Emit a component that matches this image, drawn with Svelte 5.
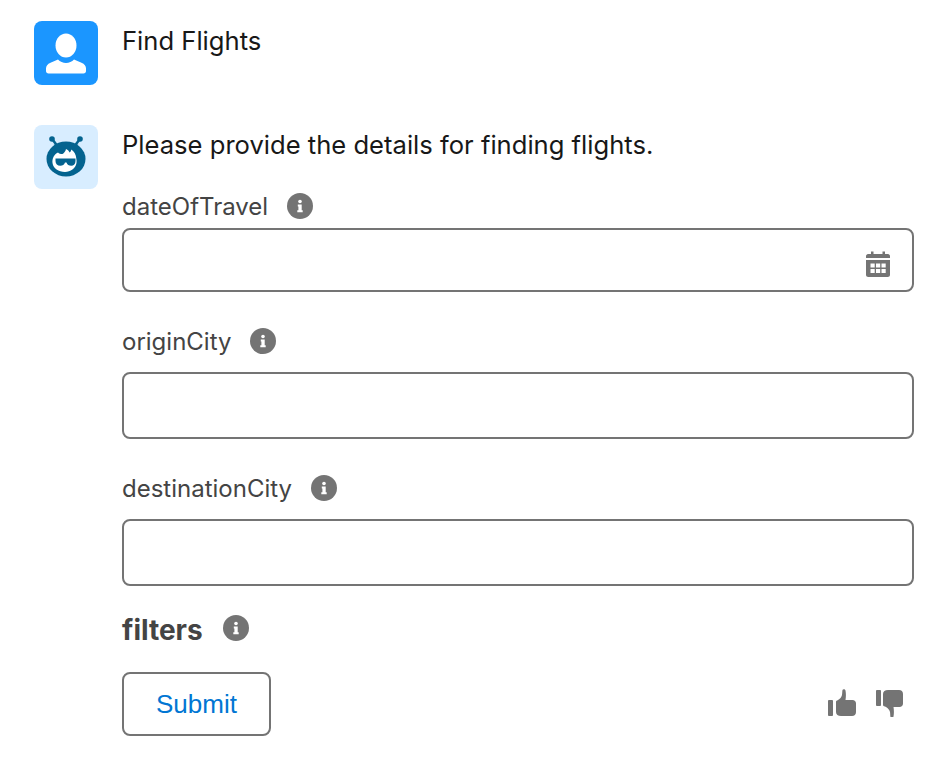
<script>
  const fields = [
    { name: "dateOfTravel", date: true },
    { name: "originCity" },
    { name: "destinationCity" }
  ];
</script>

{#snippet info()}
  <svg class="info" viewBox="0 0 26 26" width="26" height="26">
    <circle cx="13" cy="13" r="13" fill="#747474" />
    <circle cx="13" cy="8.500" r="1.800" fill="#fff" />
    <path d="M10.800 11.500h3.900v5.800h1v2h-5.400v-2h1.100v-3.800h-.6z" fill="#fff" />
  </svg>
{/snippet}

<main class="chat">
  <div class="message user">
    <div class="avatar blue">
      <svg viewBox="0 0 64 64" width="64" height="64">
        <ellipse cx="32" cy="24.500" rx="10.500" ry="12" fill="#fff" />
        <path d="M12 50v-2.500c0-2.500 1.500-4.500 4.500-5.800l7.500-3.200c2 2.300 5 3.500 8 3.500s6-1.200 8-3.500l7.500 3.200c3 1.300 4.500 3.300 4.500 5.800V50c0 1.500-1 2.500-2.500 2.500h-35C13 52.500 12 51.500 12 50z" fill="#fff" />
      </svg>
    </div>
    <p class="text">Find Flights</p>
  </div>

  <div class="message bot">
    <div class="avatar pale">
      <svg viewBox="0 0 64 64" width="64" height="64">
        <g fill="#04638f">
          <path d="M19 13l5.500 7.500-2 1.500-5.500-7.500z" />
          <path d="M45 13l-5.500 7.500 2 1.500 5.500-7.500z" />
          <circle cx="18" cy="14" r="2.800" />
          <circle cx="46" cy="14" r="2.800" />
          <ellipse cx="32" cy="34" rx="19.500" ry="17.500" />
        </g>
        <path d="M18.500 38c-.5-4.500 1.500-8.500 5.500-10.500 1 1 2.500 1.500 4.500 1.500 1.500-1 3-2.500 3.500-5 2 1 3 2 3.500 3.500 1-.5 1.500-1.500 1.800-3 3 2 4.700 5 5 9 .4 1.500.4 3 .2 4.500-1 5.500-6 9-11.500 9-6.500 0-11.700-3.500-12.500-9z" fill="#fff" />
        <path d="M21.500 33.500h20v2.500c0 3-1.700 4.800-4.300 4.800-2.300 0-4-1.200-4.700-3.300h-1.500c-.8 2.100-2.400 3.300-4.700 3.300-2.800 0-4.800-1.800-4.800-4.800z" fill="#04638f" />
      </svg>
    </div>
    <div class="body">
      <p class="text">Please provide the details for finding flights.</p>
      <form class="form" on:submit|preventDefault>
        {#each fields as field}
          <div class="field" class:dated={field.date}>
            <div class="label">
              <label for={field.name}>{field.name}</label>
              {@render info()}
            </div>
            <div class="control">
              <input id={field.name} type="text" />
              {#if field.date}
                <svg class="calendar" viewBox="0 0 24 26" width="24" height="26">
                  <path d="M5 .5h2.500v2.500h9V.5H19V3h3c1 0 2 1 2 2v2H0V5c0-1 1-2 2-2h3z" fill="#747474" />
                  <path fill-rule="evenodd" d="M0 9h24v14.700c0 1.300-1 2.300-2.300 2.300H2.300C1 26 0 25 0 23.700zM4.500 12.500v4h4.200v-4zM10 12.500v4h4.200v-4zM15.500 12.500v4h4.200v-4zM4.500 18v4h4.200v-4zM10 18v4h4.200v-4zM15.500 18v4h4.200v-4z" fill="#747474" />
                </svg>
              {/if}
            </div>
          </div>
        {/each}

        <div class="filters">
          <h3>filters</h3>
          {@render info()}
        </div>

        <div class="actions">
          <button type="submit">Submit</button>
          <div class="votes">
            <svg viewBox="0 0 28 27" width="28" height="27">
              <path d="M0 12c0-.5.500-1 1-1h3c.5 0 1 .5 1 1v14c0 .5-.5 1-1 1H1c-.5 0-1-.5-1-1z" fill="#747474" />
              <path d="M8 13c0-1 .7-1.500 2-2 2-1 3.500-3 4-5 .3-2 .2-4 .5-5 .3-1 2.500-1.300 3 .5.600 3 .5 6.500 0 9.500h7c2 0 3.500 1.500 3.500 3.500V23c0 2.500-1.500 4-4 4H13c-3 0-5-1.500-5-4z" fill="#747474" />
            </svg>
            <svg viewBox="0 0 28 28" width="28" height="28">
              <path d="M0 2c0-.5.500-1 1-1h3c.5 0 1 .5 1 1v14c0 .5-.5 1-1 1H1c-.5 0-1-.5-1-1z" fill="#747474" />
              <path d="M7 5c0-2.500 2-4 5-4h11c2.500 0 4 1.500 4 4v9.500c0 2-1.500 3.500-3.500 3.500h-6c.5 3 .6 6.500 0 9.500-.5 1.800-2.700 1.500-3 .5-.3-1-.2-3-.5-5-.5-2-2-4-4-5-1.300-.5-3-1-3-2z" fill="#747474" />
            </svg>
          </div>
        </div>
      </form>
    </div>
  </div>
</main>

<style>
  :global(body) {
    margin: 0;
    background: #fff;
  }

  .chat {
    width: 942px;
    height: 764px;
    box-sizing: border-box;
    padding: 21px 28px 0 34px;
    font-family: Inter, "Liberation Sans", sans-serif;
    color: #181818;
    overflow: hidden;
  }

  .message {
    display: flex;
    gap: 24px;
  }

  .user {
    margin-bottom: 40px;
  }

  .avatar {
    flex: none;
    width: 64px;
    height: 64px;
    border-radius: 8px;
  }

  .avatar svg {
    display: block;
  }

  .blue {
    background: #1b96ff;
  }

  .pale {
    background: #d8edff;
  }

  .body {
    flex: 1;
  }

  .text {
    margin: 0;
    font-size: 25.6px;
    line-height: 40px;
  }

  .form {
    margin-top: 21px;
  }

  .label {
    display: flex;
    align-items: center;
    gap: 19px;
    height: 40px;
    margin-bottom: 11px;
    color: #444;
    font-size: 24px;
  }

  .field {
    margin-bottom: 29px;
  }

  .field:nth-child(3) {
    margin-bottom: 24px;
  }

  .field.dated .label {
    margin-bottom: 2px;
  }

  .control {
    position: relative;
  }

  input {
    display: block;
    width: 100%;
    height: 67px;
    box-sizing: border-box;
    border: 2px solid #747474;
    border-radius: 8px;
    background: #fff;
  }

  .dated input {
    height: 64px;
  }

  .calendar {
    position: absolute;
    right: 24px;
    top: 23px;
  }

  .info {
    flex: none;
  }

  .filters {
    display: flex;
    align-items: center;
    gap: 20px;
    height: 40px;
  }

  .filters h3 {
    margin: 0;
    color: #444;
    font-size: 28px;
    font-weight: 700;
  }

  .filters .info {
    margin-top: -4px;
  }

  .actions {
    display: flex;
    justify-content: space-between;
    margin-top: 22px;
  }

  button {
    width: 149px;
    height: 64px;
    box-sizing: border-box;
    border: 2px solid #747474;
    border-radius: 8px;
    background: #fff;
    color: #0176d3;
    font-family: "Liberation Sans", Arial, sans-serif;
    font-size: 26px;
  }

  .votes {
    display: flex;
    gap: 20px;
    align-items: flex-start;
    margin-top: 17px;
    margin-right: 10px;
  }
</style>
